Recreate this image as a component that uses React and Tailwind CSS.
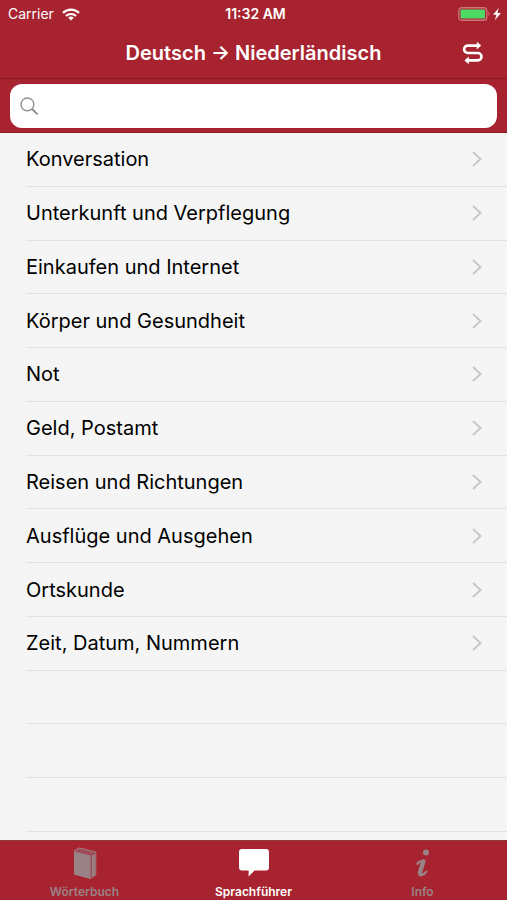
import { useState } from 'react';

const topics = [
  'Konversation',
  'Unterkunft und Verpflegung',
  'Einkaufen und Internet',
  'Körper und Gesundheit',
  'Not',
  'Geld, Postamt',
  'Reisen und Richtungen',
  'Ausflüge und Ausgehen',
  'Ortskunde',
  'Zeit, Datum, Nummern',
];

// blank rows that fill up the table below the last topic
const emptyRows = [1, 2, 3];

function WifiIcon() {
  return (
    <svg width="18" height="13" viewBox="0 0 18 13" fill="none" stroke="#fff" strokeWidth="2.2">
      <path d="M1 4.9a11.4 11.4 0 0 1 16 0" />
      <path d="M4 8a7.2 7.2 0 0 1 10 0" />
      <path d="M9 12.6 6.2 9.8a4 4 0 0 1 5.6 0z" fill="#fff" stroke="none" />
    </svg>
  );
}

function BatteryIcon() {
  return (
    <svg width="45" height="14" viewBox="0 0 45 14">
      <rect x="0.75" y="0.75" width="28" height="12.5" rx="3" fill="none" stroke="#d0757c" strokeWidth="1.3" />
      <rect x="2.5" y="2.5" width="24.5" height="9" rx="1" fill="#4cd964" />
      <path d="M30.3 5c1.3.4 1.3 3.6 0 4z" fill="#d0757c" />
      <path d="M40.8 1 35 7.800h3.400l-1.500 5.400 6-7.200h-3.500z" fill="#fff" />
    </svg>
  );
}

function SwapIcon() {
  return (
    <svg width="22" height="24" viewBox="0 0 22 24" fill="none" stroke="#fff" strokeWidth="2.6">
      <path d="M16.500 4.600H5.800a3.700 3.700 0 0 0 0 7.400h10a3.700 3.700 0 0 1 0 7.400H5.500" />
      <path d="M14.800.8 19.200 4.600l-4.400 3.800zM6.800 15.600l-4.400 3.800 4.400 3.800z" fill="#fff" stroke="none" />
    </svg>
  );
}

function SearchIcon() {
  return (
    <svg width="19" height="19" viewBox="0 0 19 19" fill="none" stroke="#8e8e93">
      <circle cx="7.4" cy="7.4" r="6.4" strokeWidth="1.4" />
      <path d="m12 12 5.6 5.4" strokeWidth="2" />
    </svg>
  );
}

function ChevronIcon() {
  return (
    <svg width="12" height="18" viewBox="0 0 12 18" fill="none" stroke="#c7c7cc" strokeWidth="2">
      <path d="m2 2 7.500 7L2 16" />
    </svg>
  );
}

function BookIcon() {
  return (
    <svg width="24" height="32" viewBox="0 0 24 32">
      <path d="M1 3.6 6.2.6l16.6 4.2v23L17.6 32 1 27.6z" fill="#a04a56" />
      <path d="M1 4.4 17.6 8.6V32L1 27.6z" fill="#998285" />
      <path d="M1 4.2 6.2 1l16.6 4.2v22.6L18.4 31" fill="none" stroke="#998285" strokeWidth="1" />
      <path d="M20.400 8v21" stroke="#998285" strokeWidth="3" />
    </svg>
  );
}

function BubbleIcon() {
  return (
    <svg width="30" height="28" viewBox="0 0 30 28">
      <path d="M3 0h24a3 3 0 0 1 3 3v15.5a3 3 0 0 1-3 3H15.5L9.6 27.5V21.5H3a3 3 0 0 1-3-3V3a3 3 0 0 1 3-3z" fill="#fff" />
    </svg>
  );
}

function InfoIcon() {
  return (
    <svg width="16" height="28" viewBox="0 0 16 28" fill="none" stroke="#998285" strokeLinecap="round" strokeLinejoin="round">
      <circle cx="11" cy="3.4" r="3" fill="#998285" stroke="none" />
      <path d="M2.400 14.800c1.500-1.900 3.400-2.900 6-2.900" strokeWidth="2.2" />
      <path d="M8.400 12.400 5.200 22.600c-.5 1.700-.1 2.600.6 2.600" strokeWidth="4.4" />
      <path d="M6 26c2.200 0 4-1.400 5.400-3.400" strokeWidth="2.2" />
    </svg>
  );
}

const tabs = [
  { name: 'Wörterbuch', Icon: BookIcon },
  { name: 'Sprachführer', Icon: BubbleIcon },
  { name: 'Info', Icon: InfoIcon },
];

export default function App() {
  const [query, setQuery] = useState('');
  const [activeTab, setActiveTab] = useState('Sprachführer');

  return (
    <div className="flex min-h-screen flex-col bg-[#f5f5f5] font-['Inter','Liberation_Sans',sans-serif]">
      <header className="bg-[#a82330] text-white">
        {/* Status bar */}
        <div className="grid h-7 grid-cols-3 items-center pl-2 pr-1 text-sm">
          <div className="flex items-center gap-2">
            <span>Carrier</span>
            <WifiIcon />
          </div>
          <span className="text-center font-semibold">11:32 AM</span>
          <div className="flex justify-end">
            <BatteryIcon />
          </div>
        </div>

        {/* Title bar */}
        <div className="grid h-[50px] grid-cols-[52px_1fr_52px] items-center px-2">
          <h1 className="col-start-2 text-center text-xl font-semibold">Deutsch → Niederländisch</h1>
          <button type="button" aria-label="Sprachen tauschen" className="flex justify-center">
            <SwapIcon />
          </button>
        </div>

        {/* Search */}
        <div className="border-y border-[#8a1a27] px-[10px] pt-[5px] pb-1">
          <label className="flex h-11 items-center gap-2 rounded-xl bg-white px-[10px]">
            <SearchIcon />
            <input
              type="search"
              aria-label="Suchen"
              value={query}
              onChange={(e) => setQuery(e.target.value)}
              className="min-w-0 flex-1 bg-transparent text-lg text-black outline-none"
            />
          </label>
        </div>
      </header>

      <main className="flex flex-1 flex-col pb-2">
        <ul className="grid flex-1 auto-rows-fr pl-[26px]">
          {topics.map((topic) => (
            <li key={topic} className="flex border-b border-[#e2e2e4]">
              <button type="button" className="flex flex-1 items-center justify-between pr-6 text-left text-xl text-black">
                {topic}
                <ChevronIcon />
              </button>
            </li>
          ))}
          {emptyRows.map((row) => (
            <li key={row} className="border-b border-[#e2e2e4]" />
          ))}
        </ul>
      </main>

      <nav className="grid h-[60px] grid-cols-3 border-t border-[#8f3a43] bg-[#a82330]">
        {tabs.map(({ name, Icon }) => (
          <button
            key={name}
            type="button"
            onClick={() => setActiveTab(name)}
            className={`flex flex-col items-center text-xs font-semibold ${activeTab === name ? 'text-white' : 'text-[#998285]'}`}
          >
            <span className="flex h-11 items-center">
              <Icon />
            </span>
            <span className="leading-[14px]">{name}</span>
          </button>
        ))}
      </nav>
    </div>
  );
}
